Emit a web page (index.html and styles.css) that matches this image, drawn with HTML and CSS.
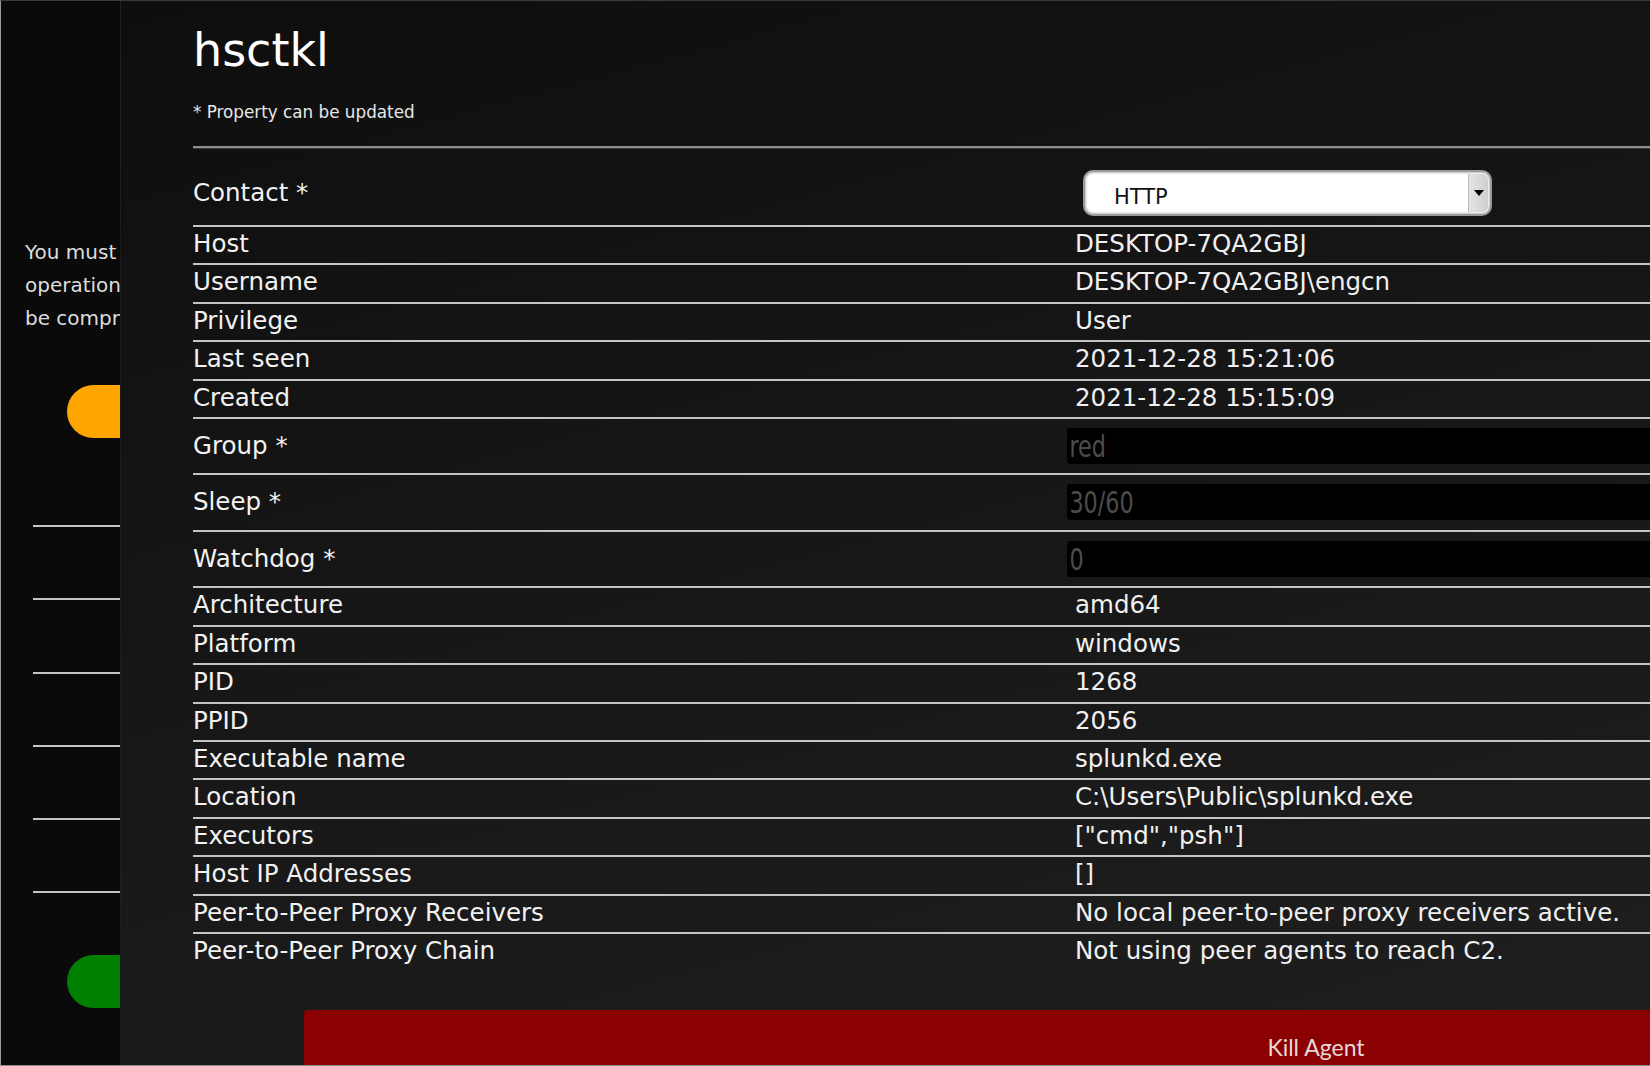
FILE: index.html
```html
<!DOCTYPE html>
<html>
<head>
  <title>hsctkl</title>
  <link rel="stylesheet" href="styles.css">
</head>
<body>
  <div class="frame">
    <div class="sidebar">
      <p class="notice">You must select an<br>operation before agents can<br>be compromised.</p>
      <div class="pill pill-orange"></div>
      <div class="rules">
        <div class="rule"></div>
        <div class="rule"></div>
        <div class="rule"></div>
        <div class="rule"></div>
        <div class="rule"></div>
        <div class="rule"></div>
      </div>
      <div class="pill pill-green"></div>
    </div>

    <div class="main">
      <h1>hsctkl</h1>
      <p class="hint">* Property can be updated</p>
      <hr>
      <table class="props">
        <tr class="contact-row">
          <td class="label">Contact *</td>
          <td class="value">
            <div class="select-wrap">
              <select class="contact">
                <option>HTTP</option>
              </select>
              <span class="select-arrow"></span>
            </div>
          </td>
        </tr>
        <tr><td class="label">Host</td><td class="value"><span class="val">DESKTOP-7QA2GBJ</span></td></tr>
        <tr><td class="label">Username</td><td class="value"><span class="val">DESKTOP-7QA2GBJ\engcn</span></td></tr>
        <tr><td class="label">Privilege</td><td class="value"><span class="val">User</span></td></tr>
        <tr><td class="label">Last seen</td><td class="value"><span class="val">2021-12-28 15:21:06</span></td></tr>
        <tr><td class="label">Created</td><td class="value"><span class="val">2021-12-28 15:15:09</span></td></tr>
        <tr class="input-row"><td class="label">Group *</td><td class="value"><input type="text" value="red"></td></tr>
        <tr class="input-row"><td class="label">Sleep *</td><td class="value"><input type="text" value="30/60"></td></tr>
        <tr class="input-row"><td class="label">Watchdog *</td><td class="value"><input type="text" value="0"></td></tr>
        <tr><td class="label">Architecture</td><td class="value"><span class="val">amd64</span></td></tr>
        <tr><td class="label">Platform</td><td class="value"><span class="val">windows</span></td></tr>
        <tr><td class="label">PID</td><td class="value"><span class="val">1268</span></td></tr>
        <tr><td class="label">PPID</td><td class="value"><span class="val">2056</span></td></tr>
        <tr><td class="label">Executable name</td><td class="value"><span class="val">splunkd.exe</span></td></tr>
        <tr><td class="label">Location</td><td class="value"><span class="val">C:\Users\Public\splunkd.exe</span></td></tr>
        <tr><td class="label">Executors</td><td class="value"><span class="val">["cmd","psh"]</span></td></tr>
        <tr><td class="label">Host IP Addresses</td><td class="value"><span class="val">[]</span></td></tr>
        <tr><td class="label">Peer-to-Peer Proxy Receivers</td><td class="value"><span class="val">No local peer-to-peer proxy receivers active.</span></td></tr>
        <tr><td class="label">Peer-to-Peer Proxy Chain</td><td class="value"><span class="val">Not using peer agents to reach C2.</span></td></tr>
      </table>
      <button class="kill">Kill Agent</button>
    </div>
  </div>
</body>
</html>
```

FILE: styles.css
```css
html, body {
  margin: 0;
  padding: 0;
  overflow: hidden;
  background: #111;
}
body {
  font-family: "DejaVu Sans", Verdana, sans-serif;
  color: #f0f0f0;
}
.frame {
  display: flex;
  height: 1066px;
  box-sizing: border-box;
  border-top: 1px solid #3a3a3a;
  border-left: 1px solid #9a9a9a;
  border-bottom: 1px solid #8a8a8a;
}

/* left panel, mostly cut off */
.sidebar {
  width: 120px;
  flex-shrink: 0;
  box-sizing: border-box;
  background: #0a0a0a;
  border-right: 1px solid #1d1d1d;
  overflow: hidden;
}
.notice {
  width: 340px;
  margin: 235px 0 0 24px;
  font-size: 20px;
  line-height: 33px;
  color: #ddd;
}
.pill {
  width: 120px;
  height: 53px;
  margin-left: 66px;
  border-radius: 27px;
}
.pill-orange {
  margin-top: 50px;
  background: #ffa500;
}
.pill-green {
  margin-top: 62px;
  background: #008000;
}
.rules {
  margin-top: 87px;
}
.rule {
  width: 200px;
  height: 2px;
  margin-left: 32px;
  margin-bottom: 71.3px;
  background: #c4c4c4;
}
.rule:last-child {
  margin-bottom: 0;
}

/* agent details */
.main {
  flex: 1;
  min-width: 0;
  padding-left: 72px;
  overflow: hidden;
  background: linear-gradient(165deg, #0e0e0e 0%, #161616 45%, #1f1f1f 100%);
}
h1 {
  margin: 22px 0 0;
  font-size: 46px;
  font-weight: normal;
  color: #fff;
}
.hint {
  margin: 25px 0 0;
  font-size: 16.8px;
  color: #e8e8e8;
}
hr {
  margin: 24px 0 0;
  border: 0;
  border-top: 2px solid #8e8e8e;
  border-bottom: 1px solid #3a3a3a;
}
.props {
  width: 1800px;
  margin-top: 12px;
  border-collapse: collapse;
  font-size: 24.5px;
  line-height: 28px;
}
.props td {
  padding: 3px 0 5.4px;
  vertical-align: middle;
  white-space: nowrap;
}
.props tr + tr td {
  border-top: 2px solid #c4c4c4;
}
.props .label {
  width: 874px;
  color: #f2f2f2;
}
.props .val {
  padding-left: 8px;
}
.props .contact-row td {
  padding: 9px 0;
}
.props .input-row td {
  padding: 9px 0 9.5px;
}

.select-wrap {
  position: relative;
  width: 409px;
  margin-left: 16px;
}
.contact {
  display: block;
  width: 100%;
  height: 46px;
  padding: 8px 0 0 29px;
  box-sizing: border-box;
  border: 2px solid #9a9a9a;
  border-radius: 10px;
  background: #fff;
  box-shadow: inset 0 0 3px #777;
  font-family: "DejaVu Sans", sans-serif;
  font-size: 21px;
  color: #111;
  appearance: none;
  -webkit-appearance: none;
}
.select-arrow {
  position: absolute;
  top: 4px;
  right: 4px;
  bottom: 4px;
  width: 19px;
  border-left: 1px solid #bbb;
  border-radius: 0 6px 6px 0;
  background: linear-gradient(90deg, #e4e4e4, #cfcfcf);
}
.select-arrow::after {
  content: "";
  position: absolute;
  top: 16px;
  left: 5px;
  border-left: 5px solid transparent;
  border-right: 5px solid transparent;
  border-top: 6px solid #000;
}

.props input {
  display: block;
  width: 100%;
  height: 36px;
  box-sizing: border-box;
  padding: 0 3px;
  border: 0;
  border-radius: 4px;
  background: #000;
  color: #4c4c4c;
  font-family: "Liberation Sans Narrow", "DejaVu Sans Condensed", sans-serif;
  font-size: 31px;
  line-height: 36px;
  transform: scaleX(0.8);
  transform-origin: left center;
}

.kill {
  display: block;
  width: 2024px;
  height: 74px;
  margin: 39.5px 0 0 111px;
  padding: 0;
  box-sizing: border-box;
  border: 0;
  border-radius: 4px 4px 0 0;
  background: #8b0000;
  color: #e8d8d8;
  font-family: Lato, "Open Sans", sans-serif;
  font-size: 23px;
  line-height: 26px;
  text-align: center;
}
```
